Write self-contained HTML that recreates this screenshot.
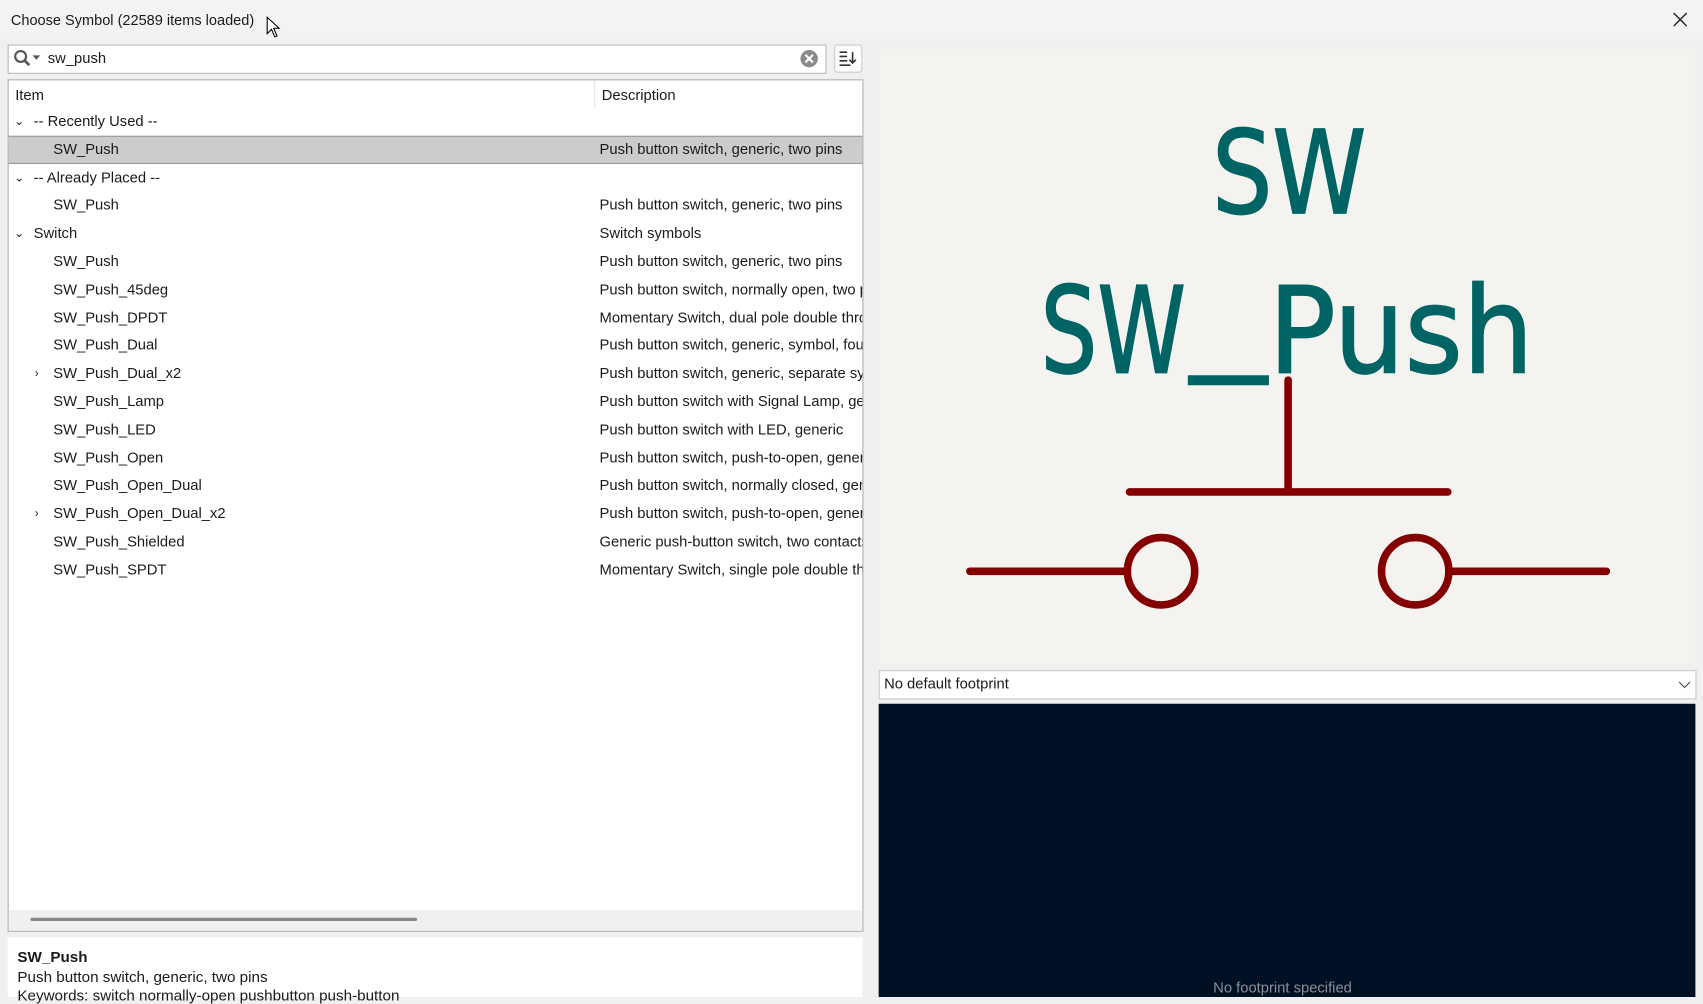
<!DOCTYPE html>
<html><head><meta charset="utf-8"><style>
html,body{margin:0;padding:0;overflow:hidden;background:#f0f0f0}
#w{position:absolute;left:0;top:0;width:1568px;height:918px;transform:scale(1.08610,1.08606);transform-origin:0 0;background:#f0f0f0;font-family:"Liberation Sans",sans-serif;font-size:13.6px;color:#1a1a1a}
.a{position:absolute}
.row{position:absolute;left:0;width:786px;height:26px;line-height:26px}
.row .n{position:absolute;left:41px}
.row .d{position:absolute;left:544px;white-space:nowrap;overflow:hidden;width:242px}
.chev{position:absolute;left:5px;top:0;font-size:11px}
</style></head><body><div id="w">
<div class="a" style="left:0;top:0;width:1568px;height:36px;background:#f3f3f3"></div>
<div class="a" style="left:10px;top:11px;font-size:13.4px">Choose Symbol (22589 items loaded)</div>
<svg class="a" style="left:244px;top:14px" width="14" height="22"><path d="M2 2 L2 17 L6 13 L9 20 L11 19 L8 12 L13 12 Z" fill="#fff" stroke="#000" stroke-width="1"/></svg>
<svg class="a" style="left:1539px;top:10px" width="16" height="16"><path d="M2 2L14 14M14 2L2 14" stroke="#222" stroke-width="1.3"/></svg>
<div class="a" style="left:7px;top:41px;width:752px;height:25px;background:#fff;border:1px solid #b8b8b8"></div>
<svg class="a" style="left:12px;top:45px" width="28" height="18"><circle cx="7" cy="7" r="5" fill="none" stroke="#555" stroke-width="2"/><path d="M11 11L15 15" stroke="#555" stroke-width="2.5"/><path d="M18 6L25 6L21.5 10Z" fill="#555"/></svg>
<div class="a" style="left:44px;top:46px">sw_push</div>
<svg class="a" style="left:736px;top:45px" width="18" height="18"><circle cx="9" cy="9" r="8" fill="#8a8a8a"/><path d="M5.5 5.5L12.5 12.5M12.5 5.5L5.5 12.5" stroke="#fff" stroke-width="2"/></svg>
<div class="a" style="left:768px;top:41px;width:24px;height:24px;background:#fdfdfd;border:1px solid #ccc;border-radius:3px"></div>
<svg class="a" style="left:771px;top:45px" width="20" height="18"><path d="M2 3H9M2 7H9M2 11H9M2 15H12M14 3V13M11 10L14 13L17 10" stroke="#333" stroke-width="1.5" fill="none"/></svg>
<div class="a" style="left:7px;top:73px;width:786px;height:783px;background:#fff;border:1px solid #adadad">
 <div class="a" style="left:6px;top:6px">Item</div>
 <div class="a" style="left:539px;top:0;width:1px;height:26px;background:#e5e5e5"></div>
 <div class="a" style="left:546px;top:6px">Description</div>
 <div class="row" style="top:25px"><span class="chev">&#8964;</span><span class="n" style="left:23px">-- Recently Used --</span></div>
 <div class="row" style="top:51px;background:#cccccc;border-top:1px solid #999;border-bottom:1px solid #999;height:24px;line-height:24px"><span class="n">SW_Push</span><span class="d">Push button switch, generic, two pins</span></div>
 <div class="row" style="top:77px"><span class="chev">&#8964;</span><span class="n" style="left:23px">-- Already Placed --</span></div>
 <div class="row" style="top:102px"><span class="n">SW_Push</span><span class="d">Push button switch, generic, two pins</span></div>
 <div class="row" style="top:128px"><span class="chev">&#8964;</span><span class="n" style="left:23px">Switch</span><span class="d">Switch symbols</span></div>
 <div class="row" style="top:154px"><span class="n">SW_Push</span><span class="d">Push button switch, generic, two pins</span></div>
 <div class="row" style="top:180px"><span class="n">SW_Push_45deg</span><span class="d">Push button switch, normally open, two pins</span></div>
 <div class="row" style="top:206px"><span class="n">SW_Push_DPDT</span><span class="d">Momentary Switch, dual pole double throw</span></div>
 <div class="row" style="top:231px"><span class="n">SW_Push_Dual</span><span class="d">Push button switch, generic, symbol, four pins</span></div>
 <div class="row" style="top:257px"><span class="chev" style="left:24px">&#8250;</span><span class="n">SW_Push_Dual_x2</span><span class="d">Push button switch, generic, separate symbols</span></div>
 <div class="row" style="top:283px"><span class="n">SW_Push_Lamp</span><span class="d">Push button switch with Signal Lamp, generic</span></div>
 <div class="row" style="top:309px"><span class="n">SW_Push_LED</span><span class="d">Push button switch with LED, generic</span></div>
 <div class="row" style="top:335px"><span class="n">SW_Push_Open</span><span class="d">Push button switch, push-to-open, generic</span></div>
 <div class="row" style="top:360px"><span class="n">SW_Push_Open_Dual</span><span class="d">Push button switch, normally closed, generic</span></div>
 <div class="row" style="top:386px"><span class="chev" style="left:24px">&#8250;</span><span class="n">SW_Push_Open_Dual_x2</span><span class="d">Push button switch, push-to-open, generic</span></div>
 <div class="row" style="top:412px"><span class="n">SW_Push_Shielded</span><span class="d">Generic push-button switch, two contacts</span></div>
 <div class="row" style="top:438px"><span class="n">SW_Push_SPDT</span><span class="d">Momentary Switch, single pole double throw</span></div>
 <div class="a" style="left:0;top:764px;width:786px;height:19px;background:#f0f0f0"></div>
 <div class="a" style="left:20px;top:771px;width:356px;height:3px;background:#888;border-radius:2px"></div>
</div>
<div class="a" style="left:7px;top:863px;width:787px;height:55px;background:#fff"></div>
<div class="a" style="left:16px;top:873px;font-weight:bold;font-size:14px">SW_Push</div>
<div class="a" style="left:16px;top:891px;font-size:14px">Push button switch, generic, two pins</div>
<div class="a" style="left:16px;top:908px;font-size:14px">Keywords: switch normally-open pushbutton push-button</div>
<div class="a" style="left:809px;top:45px;width:752px;height:567px;background:#f4f3ef"></div>
<svg class="a" style="left:809px;top:45px" width="752" height="567" viewBox="809 45 752 567">
 <g font-family="DejaVu Sans" fill="#006464" stroke="#006464" stroke-width="1.5">
 <text x="1116" y="196" font-size="106" textLength="142" lengthAdjust="spacingAndGlyphs">SW</text>
 <text x="958" y="343" font-size="110" textLength="134" lengthAdjust="spacingAndGlyphs">SW</text>
 <text x="1096" y="328" font-size="110" textLength="70" lengthAdjust="spacingAndGlyphs">_</text>
 <text x="1168" y="343" font-size="110" textLength="244" lengthAdjust="spacingAndGlyphs">Push</text>
 </g>
 <g stroke="#840000" stroke-width="7" fill="none" stroke-linecap="round">
  <path d="M1186 350V452M1040 453H1333M893 526H1038M1334 526H1479"/>
  <circle cx="1069" cy="526" r="31"/><circle cx="1303" cy="526" r="31"/>
 </g>
</svg>
<div class="a" style="left:809px;top:617px;width:751px;height:25px;background:#fff;border:1px solid #c8c8c8"></div>
<div class="a" style="left:814px;top:622px">No default footprint</div>
<svg class="a" style="left:1545px;top:625px" width="12" height="10"><path d="M1 3L6 8L11 3" stroke="#444" fill="none"/></svg>
<div class="a" style="left:809px;top:648px;width:752px;height:270px;background:#001023"></div>
<div class="a" style="left:1117px;top:902px;color:#8a8f98">No footprint specified</div>
</div></body></html>
